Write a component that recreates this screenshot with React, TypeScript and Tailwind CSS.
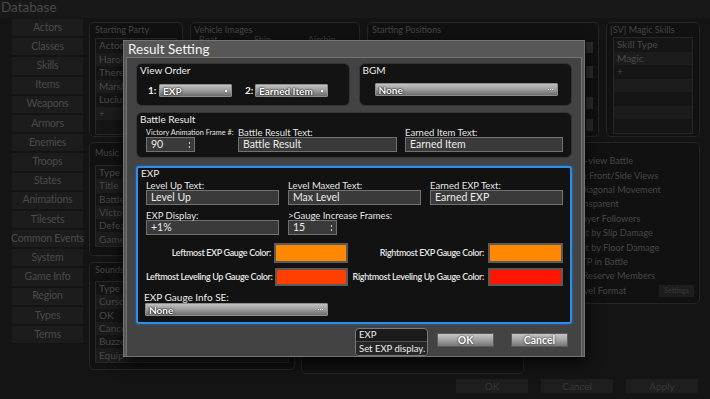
import React from "react";

const sidebar = [
  "Actors",
  "Classes",
  "Skills",
  "Items",
  "Weapons",
  "Armors",
  "Enemies",
  "Troops",
  "States",
  "Animations",
  "Tilesets",
  "Common Events",
  "System",
  "Game Info",
  "Region",
  "Types",
  "Terms",
];

const options = [
  "Use Side-view Battle",
  "Optimize Front/Side Views",
  "Enable Diagonal Movement",
  "Start Transparent",
  "Show Player Followers",
  "Knockout by Slip Damage",
  "Knockout by Floor Damage",
  "Display TP in Battle",
  "EXP for Reserve Members",
  "Show Level Format",
];

const BgPanel = ({ title, className, children }: { title: string; className: string; children?: React.ReactNode }) => (
  <div className={`flex flex-col rounded-[5px] border border-[#252525] bg-[#111111] px-[5px] ${className}`}>
    <div className="h-[11px] whitespace-nowrap text-[9px] leading-[11px] text-[#454545]">{title}</div>
    {children}
  </div>
);

const BgList = ({ rows, total, rowH }: { rows: string[]; total: number; rowH: string }) => (
  <div className="flex flex-col border border-[#262626]">
    {Array.from({ length: total }).map((_, i) => (
      <div
        key={i}
        className={`${rowH} flex items-center whitespace-nowrap pl-[3px] text-[10px] text-[#4a4a4a] ${i % 2 ? "bg-[#1c1c1c]" : "bg-[#151515]"}`}
      >
        {rows[i] ?? ""}
      </div>
    ))}
  </div>
);

const Dots = () => (
  <span className="flex gap-[1px]">
    <span className="h-[1px] w-[1px] bg-white" />
    <span className="h-[1px] w-[1px] bg-white" />
    <span className="h-[1px] w-[1px] bg-white" />
  </span>
);

const Dropdown = ({ text, dots, className }: { text: string; dots?: boolean; className: string }) => (
  <div
    className={`flex h-[13px] items-center justify-between rounded-[1px] border border-[#8e8e8e] bg-gradient-to-b from-[#c2c2c2] via-[#9c9c9c] to-[#6c6c6c] pl-[3px] pr-[4px] text-[10px] font-bold leading-none text-white [text-shadow:0_0_2px_#000,0_0_1px_#000] ${className}`}
  >
    <span>{text}</span>
    {dots ? <Dots /> : <span className="h-[2px] w-[2px] bg-white shadow-[0_0_1px_#000]" />}
  </div>
);

const Input = ({ text, className }: { text: string; className: string }) => (
  <div className={`flex h-[15px] items-center border border-[#727272] bg-[#3a3a3a] pl-[4px] text-[10.5px] leading-none text-[#ececec] ${className}`}>
    {text}
  </div>
);

const Spin = ({ text }: { text: string }) => (
  <div className="flex h-[15px] w-[49px] items-center justify-between border border-[#727272] bg-[#3a3a3a] pl-[4px] pr-[4px] text-[10.5px] leading-none text-[#ececec]">
    <span>{text}</span>
    <span className="flex flex-col gap-[2px]">
      <span className="h-[2px] w-[1px] bg-[#cfcfcf]" />
      <span className="h-[2px] w-[1px] bg-[#cfcfcf]" />
    </span>
  </div>
);

const Label = ({ children }: { children: React.ReactNode }) => (
  <div className="h-[9px] whitespace-nowrap text-[9.5px] leading-[9px] text-[#e6e6e6]">{children}</div>
);

const Swatch = ({ color, h }: { color: string; h: string }) => <div className={`${h} border-2 border-[#5a5a5a] ${color}`} />;

const Button = ({ text, className = "" }: { text: string; className?: string }) => (
  <div
    className={`flex h-[14px] w-[57px] items-center justify-center border border-[#5c5c5c] bg-gradient-to-b from-[#c6c6c6] via-[#a2a2a2] to-[#777777] text-[10.5px] font-bold leading-none text-white [text-shadow:0_0_2px_#000] ${className}`}
  >
    {text}
  </div>
);

const Panel = ({ label, className = "", children }: { label: string; className?: string; children?: React.ReactNode }) => (
  <div className={`flex flex-col rounded-[6px] border border-[#353535] bg-[#131313] pl-[3px] pt-[1px] ${className}`}>
    <div className="h-[11px] text-[10px] leading-[11px] text-[#ececec]">{label}</div>
    {children}
  </div>
);

const ColorLabel = ({ children }: { children: React.ReactNode }) => (
  <span className="whitespace-nowrap text-[9px] font-semibold tracking-[-0.35px] text-[#e6e6e6]">{children}</span>
);

export default function App() {
  return (
    <div className="relative flex h-[399px] w-[710px] flex-col overflow-hidden bg-[#141414] font-['Lato',sans-serif]">
      <div className="h-[18px] bg-[#181818] pl-[1px] text-[13.5px] leading-[15px] text-[#4a4a4a]">Database</div>

      <div className="flex h-[356px]">
        <div className="ml-[12px] flex w-[71px] flex-col gap-[2px] pt-[1px]">
          {sidebar.map((s) => (
            <div
              key={s}
              className="flex h-[17.2px] items-center justify-center whitespace-nowrap bg-[#1c1c1c] text-[10.5px] tracking-[-0.2px] text-[#4b4b4b]"
            >
              {s}
            </div>
          ))}
        </div>

        <div className="ml-[6px] mr-[10px] flex flex-1 flex-col pt-[4px]">
          <div className="flex h-[115px] gap-[7px]">
            <BgPanel title="Starting Party" className="w-[94px] pt-[1px]">
              <div className="mt-[3px]">
                <BgList rows={["Actor", "Harold", "Therese", "Marsha", "Lucius", "+"]} total={7} rowH="h-[13.5px]" />
              </div>
            </BgPanel>
            <BgPanel title="Vehicle Images" className="w-[170px] pl-[3px] pt-[1px]">
              <div className="flex pl-[5px] text-[9px] leading-[9px] text-[#3e3e3e]">
                <span className="w-[55px]">Boat</span>
                <span className="w-[54px]">Ship</span>
                <span>Airship</span>
              </div>
            </BgPanel>
            <BgPanel title="Starting Positions" className="w-[232px] pl-[4px] pt-[1px]">
              <div className="flex flex-col items-end">
                <div className="mt-[7px] h-[11px] w-[7px] bg-[#2a2a2a]" />
                <div className="mt-[13px] h-[12px] w-[7px] bg-[#2a2a2a]" />
                <div className="mt-[19px] h-[12px] w-[7px] bg-[#2a2a2a]" />
                <div className="mt-[10px] h-[12px] w-[7px] bg-[#2a2a2a]" />
              </div>
            </BgPanel>
            <BgPanel title="[SV] Magic Skills" className="flex-1 pl-[3px] pt-[1px]">
              <div className="mt-[2px] pl-[3px] pr-[1px]">
                <BgList rows={["Skill Type", "Magic", "+"]} total={7} rowH="h-[13.5px]" />
              </div>
            </BgPanel>
          </div>

          <div className="mt-[5px] flex flex-1 gap-[6px]">
            <div className="flex w-[206px] flex-col gap-[6px]">
              <BgPanel title="Music" className="h-[114px] pt-[4px]">
                <div className="mt-[7px]">
                  <BgList rows={["Type", "Title", "Battle", "Victory", "Defeat", "Game Over"]} total={6} rowH="h-[13.3px]" />
                </div>
              </BgPanel>
              <BgPanel title="Sounds" className="h-[108px] pt-[1px]">
                <div className="mt-[6px]">
                  <BgList rows={["Type", "Cursor", "OK", "Cancel", "Buzzer", "Equip"]} total={6} rowH="h-[13.3px]" />
                </div>
              </BgPanel>
            </div>
            <BgPanel title="Menu Commands" className="w-[223px]" />
            <div className="flex flex-1 flex-col">
              <div className="flex h-[162px] flex-col rounded-[5px] border border-[#252525] bg-[#111111] pl-[8px] pt-[11px]">
                {options.map((o, i) => (
                  <div key={o} className="flex h-[14.4px] items-center gap-[4px] whitespace-nowrap text-[9.2px] text-[#474747]">
                    <span className="h-[7px] w-[7px] border border-[#333333]" />
                    <span>{o}</span>
                    {i === options.length - 1 && (
                      <span className="ml-auto mr-[5px] flex h-[12px] w-[35px] items-center justify-center bg-[#1e1e1e] text-[7px] text-[#3a3a3a]">
                        Settings
                      </span>
                    )}
                  </div>
                ))}
              </div>
            </div>
          </div>
        </div>
      </div>

      <div className="flex justify-end gap-[13px] pr-[12px] pt-[5px]">
        {["OK", "Cancel", "Apply"].map((b) => (
          <div key={b} className="flex h-[14px] w-[72px] items-center justify-center bg-[#1e1e1e] text-[10px] text-[#393939]">
            {b}
          </div>
        ))}
      </div>

      {/* modal dialog */}
      <div className="absolute left-[123px] top-[40px] flex h-[317px] w-[462px] flex-col border border-[#747474] bg-[#575757] shadow-[0_6px_14px_rgba(0,0,0,0.75)]">
        <div className="h-[16px] pl-[4px] text-[13.5px] leading-[16px] text-[#f4f4f4]">Result Setting</div>
        <div className="mx-[2px] mb-[2px] flex flex-1 flex-col border border-[#747474] bg-[#434343] px-[9px] pt-[5px]">
          <div className="grid h-[43px] grid-cols-2 gap-[9px]">
            <Panel label="View Order">
              <div className="mt-[7px] flex items-center pl-[8px] text-[10px] font-bold text-[#f0f0f0]">
                <span className="w-[11px]">1:</span>
                <Dropdown text="EXP" className="w-[73px]" />
                <span className="ml-[13px] w-[10px]">2:</span>
                <Dropdown text="Earned Item" className="w-[73px]" />
              </div>
            </Panel>
            <Panel label="BGM">
              <div className="mt-[7px] pl-[12px]">
                <Dropdown text="None" dots className="w-[183px]" />
              </div>
            </Panel>
          </div>

          <Panel label="Battle Result" className="mt-[6px] h-[46px]">
            <div className="mt-[3px] flex pl-[6px]">
              <div className="w-[92px]">
                <div className="h-[9px] whitespace-nowrap text-[7.3px] leading-[9px] text-[#e6e6e6]">Victory Animation Frame #:</div>
                <Spin text="90" />
              </div>
              <div className="w-[167px]">
                <Label>Battle Result Text:</Label>
                <Input text="Battle Result" className="w-[159px]" />
              </div>
              <div>
                <Label>Earned Item Text:</Label>
                <Input text="Earned Item" className="w-[158px]" />
              </div>
            </div>
          </Panel>

          <div className="mt-[8px] flex h-[158px] flex-col rounded-[3px] border-2 border-[#2b8fe8] bg-[#121212] pl-[3px] shadow-[0_0_3px_#1a6fc0]">
            <div className="h-[11px] text-[10px] leading-[10px] text-[#ececec]">EXP</div>
            <div className="ml-[5px] mt-[2px] flex gap-[9px]">
              <div>
                <Label>Level Up Text:</Label>
                <Input text="Level Up" className="w-[133px]" />
              </div>
              <div>
                <Label>Level Maxed Text:</Label>
                <Input text="Max Level" className="w-[133px]" />
              </div>
              <div>
                <Label>Earned EXP Text:</Label>
                <Input text="Earned EXP" className="w-[133px]" />
              </div>
            </div>
            <div className="ml-[5px] mt-[6px] flex gap-[9px]">
              <div>
                <Label>EXP Display:</Label>
                <Input text="+1%" className="w-[133px]" />
              </div>
              <div>
                <Label>&gt;Gauge Increase Frames:</Label>
                <Spin text="15" />
              </div>
            </div>
            <div className="ml-[5px] mt-[8px] flex">
              <div className="flex w-[202px] items-center justify-end gap-[3px]">
                <ColorLabel>Leftmost EXP Gauge Color:</ColorLabel>
                <div className="w-[74px]">
                  <Swatch color="bg-[#ff8800]" h="h-[20px]" />
                </div>
              </div>
              <div className="flex w-[215px] items-center justify-end gap-[4px]">
                <ColorLabel>Rightmost EXP Gauge Color:</ColorLabel>
                <div className="w-[75px]">
                  <Swatch color="bg-[#ff8800]" h="h-[20px]" />
                </div>
              </div>
            </div>
            <div className="ml-[5px] mt-[5px] flex">
              <div className="flex w-[202px] items-center justify-end gap-[3px]">
                <ColorLabel>Leftmost Leveling Up Gauge Color:</ColorLabel>
                <div className="w-[74px]">
                  <Swatch color="bg-[#ff3f00]" h="h-[18px]" />
                </div>
              </div>
              <div className="flex w-[215px] items-center justify-end gap-[4px]">
                <ColorLabel>Rightmost Leveling Up Gauge Color:</ColorLabel>
                <div className="w-[75px]">
                  <Swatch color="bg-[#ff1500]" h="h-[18px]" />
                </div>
              </div>
            </div>
            <div className="ml-[3px] mt-[6px]">
              <div className="h-[10px] text-[10px] leading-[10px] text-[#ececec]">EXP Gauge Info SE:</div>
              <div className="ml-[1px] mt-[1px]">
                <Dropdown text="None" dots className="w-[183px]" />
              </div>
            </div>
          </div>

          <div className="mt-[4px] flex items-start justify-end pr-[4px]">
            <div className="flex h-[28px] w-[73px] flex-col overflow-hidden rounded-[4px] border border-[#7a7a7a] bg-[#1b1b1b] text-[9.5px] leading-none text-[#efefef]">
              <div className="flex h-[13px] items-center border-b border-[#505050] pl-[3px]">EXP</div>
              <div className="flex flex-1 items-center whitespace-nowrap bg-[#262626] pl-[3px]">Set EXP display.</div>
            </div>
            <Button text="OK" className="ml-[9px] mt-[5px]" />
            <Button text="Cancel" className="ml-[17px] mt-[5px]" />
          </div>
        </div>
      </div>
    </div>
  );
}
